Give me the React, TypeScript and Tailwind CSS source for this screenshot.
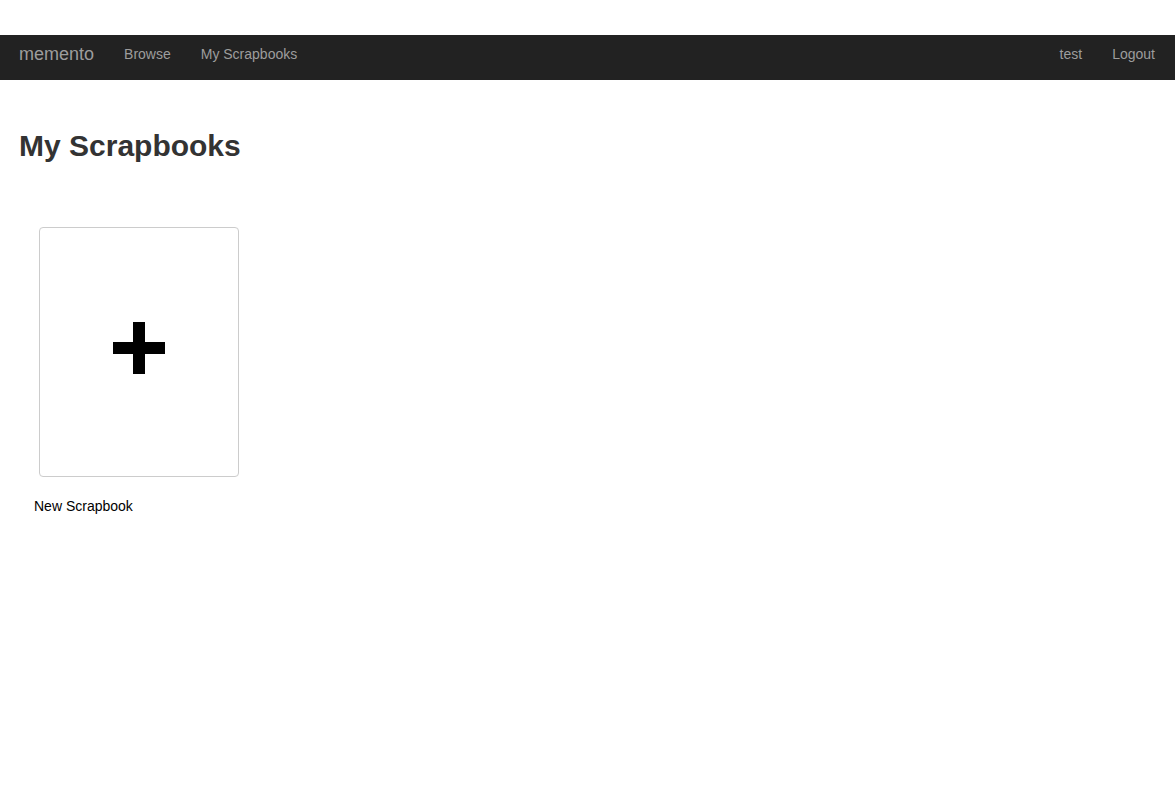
import React from 'react';

const links = ['Browse', 'My Scrapbooks'];

const App: React.FC = () => {
  return (
    <div className="min-h-screen bg-white text-[#333]" style={{ fontFamily: '"Liberation Sans", Arial, sans-serif' }}>
      <div className="h-[35px]" />

      {/* Navbar */}
      <nav className="h-[45px] bg-[#222] flex items-center justify-between pl-[4px] pr-[5px]">
        <div className="flex items-center">
          <a className="px-[15px] text-[18px] text-[#9d9d9d] leading-[20px] -mt-[8px]">memento</a>
          {links.map(l => (
            <a key={l} className="px-[15px] text-[14px] text-[#9d9d9d] leading-[20px] -mt-[8px]">{l}</a>
          ))}
        </div>
        <div className="flex items-center">
          <a className="px-[15px] text-[14px] text-[#9d9d9d] leading-[20px] -mt-[8px]">test</a>
          <a className="px-[15px] text-[14px] text-[#9d9d9d] leading-[20px] -mt-[8px]">Logout</a>
        </div>
      </nav>

      <main className="px-[19px]">
        <h2 className="mt-[49px] text-[30px] font-bold leading-[33px] text-[#333]">My Scrapbooks</h2>

        <div className="mt-[65px] pl-[15px]">
          <div className="ml-[5px] w-[200px] h-[250px] border border-[#ccc] rounded-[4px] flex items-center justify-center">
            <svg width="52" height="52" viewBox="0 0 52 52" className="-mt-[9px] -ml-[1px]">
              <rect x="20" y="0" width="12" height="52" fill="#000" />
              <rect x="0" y="20" width="52" height="12" fill="#000" />
            </svg>
          </div>
          <p className="mt-[19px] text-[14px] leading-[20px] text-black">New Scrapbook</p>
        </div>
      </main>
    </div>
  );
};

export default App;
